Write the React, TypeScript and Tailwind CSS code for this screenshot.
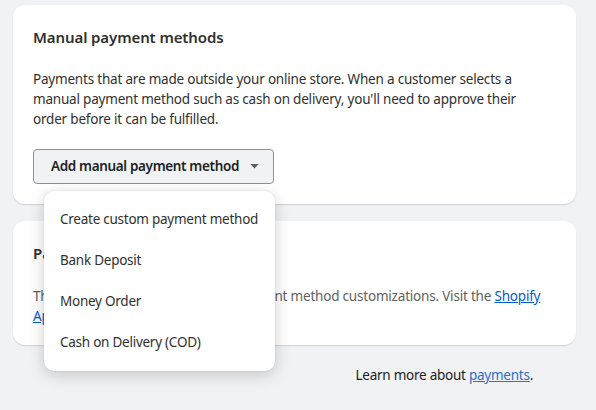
import React from "react";

export default function App() {
  const font = { fontFamily: '"Noto Sans", "Open Sans", sans-serif' };
  return (
    <div className="w-[596px] h-[410px] bg-[#f1f2f4] overflow-hidden text-[#303030]" style={font}>
      <div className="flex flex-col gap-[17px] pl-[13px] pr-[20px] pt-[5px]">
        <div className="relative bg-white rounded-[12px] shadow-[0_1px_0_rgba(26,26,26,0.07),0_1px_2px_rgba(0,0,0,0.08)] px-[20px] pt-[22px] pb-[20px]">
          <h2 className="text-[15px] font-semibold leading-[20px] tracking-[-0.1px]">Manual payment methods</h2>
          <p className="mt-[22px] max-w-[520px] text-[13.5px] leading-[20px] tracking-[-0.2px]">
            Payments that are made outside your online store. When a customer selects a manual payment method such as cash on delivery, you'll need to approve their order before it can be fulfilled.
          </p>
          <div className="relative mt-[20px] inline-block">
            <button className="flex items-center gap-[11px] h-[35px] pl-[17px] pr-[14px] rounded-[4px] border border-[#8c9196] bg-[#f1f2f4] text-[13.5px] font-semibold tracking-[-0.35px] text-[#202223] whitespace-nowrap">
              <span>Add manual payment method</span>
              <svg width="9" height="5" viewBox="0 0 10 6"><path d="M0 0h10L5 5.5z" fill="#5c5f62" /></svg>
            </button>
            <div className="absolute left-[11px] top-[42px] w-[231px] z-10 bg-white rounded-[10px] shadow-[0_4px_16px_rgba(0,0,0,0.18),0_0_2px_rgba(0,0,0,0.12)] py-[8px]">
              {["Create custom payment method", "Bank Deposit", "Money Order", "Cash on Delivery (COD)"].map((t) => (
                <div key={t} className="px-[16px] h-[41px] flex items-center whitespace-nowrap text-[13.5px] tracking-[-0.25px] text-[#303030]">{t}</div>
              ))}
            </div>
          </div>
        </div>
        <div className="bg-white rounded-[12px] shadow-[0_1px_0_rgba(26,26,26,0.07),0_1px_2px_rgba(0,0,0,0.08)] px-[20px] pt-[22px] pb-[19px]">
          <h2 className="text-[15px] font-semibold leading-[20px]">Payment customizations</h2>
          <p className="mt-[23px] text-[13.5px] leading-[20px] tracking-[-0.2px] text-[#616161]">
            There are no apps installed with payment method customizations. Visit the <a className="text-[#005bd3] underline">Shopify App Store</a> to find one.
          </p>
        </div>
        <div className="flex justify-end pr-[43px] mt-[3px] text-[13.5px] leading-[20px] tracking-[-0.25px] text-[#202223]">
          <span>Learn more about <a className="text-[#2c6ecb] underline">payments</a>.</span>
        </div>
      </div>
    </div>
  );
}
